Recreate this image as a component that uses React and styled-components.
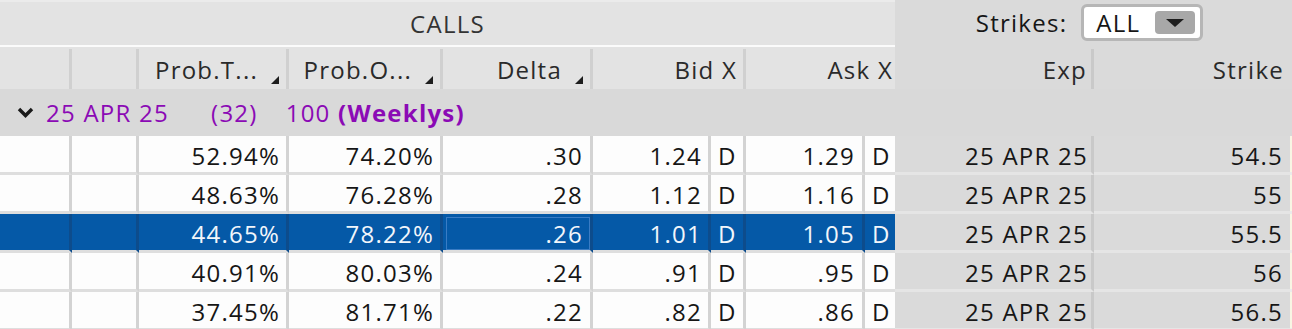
import styled, { createGlobalStyle } from "styled-components";

const GlobalStyle = createGlobalStyle`
    body {
        margin: 0;
        font-family: "Open Sans", "Noto Sans", sans-serif;
        background: #dadada;
    }
`;

const COLS = "72px 67px 150px 154px 150px 118px 35px 119px 30px 199px 196px 2px";

const Page = styled.div`
    width: 1292px;
    height: 329px;
    overflow: hidden;
    background: #dadada;
    color: #161616;
    font-size: 24px;
    letter-spacing: 1.25px;
`;

const TopBar = styled.div`
    display: grid;
    grid-template-columns: 895px 1fr;
    height: 47px;
`;

const Title = styled.div`
    display: flex;
    align-items: center;
    justify-content: center;
    background: #e3e3e3;
    border-top: 2px solid #ebebeb;
    border-bottom: 2px solid #fbfbfb;
    color: #333;
`;

const StrikesBox = styled.div`
    display: flex;
    align-items: center;
    justify-content: center;
    gap: 14px;
    padding: 0 8px 2px 0;
`;

const Select = styled.div`
    display: flex;
    align-items: center;
    justify-content: space-between;
    box-sizing: border-box;
    width: 122px;
    height: 37px;
    padding: 0 5px 0 12px;
    background: #fff;
    border: 3px solid #b6b6b6;
    border-radius: 6px;
`;

const SelectButton = styled.div`
    display: flex;
    align-items: center;
    justify-content: center;
    width: 40px;
    height: 23px;
    background: #a8a8a8;
    border-radius: 4px;
`;

const HeaderRow = styled.div`
    display: grid;
    grid-template-columns: ${COLS};
    height: 42px;
    background: linear-gradient(to right, #e3e3e3 895px, #dadada 895px);
`;

const HeaderCell = styled.div`
    display: flex;
    align-items: center;
    justify-content: flex-end;
    box-sizing: border-box;
    margin-top: 2px;
    padding-right: ${(p) => p.$pad ?? 6}px;
    grid-column: span ${(p) => p.$span ?? 1};
    border-right: ${(p) => (p.$noBorder ? "none" : `3px solid ${p.$line ?? "#d0d0d0"}`)};
    color: #2a2a2a;
    white-space: nowrap;
`;

const SortMark = styled.span`
    align-self: flex-end;
    margin: 0 1px 5px 13px;
    width: 0;
    height: 0;
    border-left: 8px solid transparent;
    border-bottom: 8px solid #1e1e1e;
`;

const GroupRow = styled.div`
    display: flex;
    align-items: center;
    height: 47px;
    padding-left: 17px;
    box-sizing: border-box;
    background: #d9d9d9;
    color: #8b0ab5;
`;

const GroupText = styled.span`
    margin-left: ${(p) => p.$gap}px;
    font-weight: ${(p) => (p.$bold ? 700 : 400)};
`;

const Row = styled.div`
    display: grid;
    grid-template-columns: ${COLS};
    height: 39px;
`;

const Cell = styled.div`
    display: flex;
    align-items: center;
    justify-content: ${(p) => (p.$left ? "flex-start" : "flex-end")};
    box-sizing: border-box;
    padding: 2px ${(p) => (p.$left ? 0 : p.$pad ?? 6)}px 0 ${(p) => (p.$left ? 7 : 0)}px;
    background: ${(p) => (p.$sel ? "#0559a7" : "#fdfdfd")};
    color: ${(p) => (p.$sel ? "#f2f6fb" : "#161616")};
    border-right: ${(p) => (p.$noBorder ? "none" : `3px solid ${p.$sel ? "#0d4c8c" : "#d3d3d3"}`)};
    border-bottom: 3px solid #dedede;
    outline: ${(p) => (p.$focus ? "1px solid #3a7cc4" : "none")};
    outline-offset: -4px;
`;

const SideCell = styled.div`
    display: flex;
    align-items: center;
    justify-content: flex-end;
    box-sizing: border-box;
    padding: 2px ${(p) => p.$pad}px 0 0;
    background: #dadada;
    border-right: ${(p) => (p.$line ? "3px solid #c9c9c9" : "none")};
    border-bottom: 3px solid #e5e5e5;
`;

const Edge = styled.div`
    background: #f8f6e4;
    border-bottom: 3px solid #ebebeb;
`;

const rows = [
    ["52.94%", "74.20%", ".30", "1.24", "1.29", "54.5"],
    ["48.63%", "76.28%", ".28", "1.12", "1.16", "55"],
    ["44.65%", "78.22%", ".26", "1.01", "1.05", "55.5"],
    ["40.91%", "80.03%", ".24", ".91", ".95", "56"],
    ["37.45%", "81.71%", ".22", ".82", ".86", "56.5"],
];

function Chevron() {
    return (
        <svg width="17" height="12" viewBox="0 0 17 12">
            <polyline points="2,2 8.5,8.5 15,2" fill="none" stroke="#1a1a1a" strokeWidth="3.4" />
        </svg>
    );
}

function App() {
    return (
        <Page>
            <GlobalStyle />
            <TopBar>
                <Title>CALLS</Title>
                <StrikesBox>
                    <span>Strikes:</span>
                    <Select>
                        <span>ALL</span>
                        <SelectButton>
                            <svg width="18" height="8" viewBox="0 0 18 8">
                                <polygon points="0,0 18,0 9,8" fill="#1e1e1e" />
                            </svg>
                        </SelectButton>
                    </Select>
                </StrikesBox>
            </TopBar>

            <HeaderRow>
                <HeaderCell />
                <HeaderCell />
                <HeaderCell>
                    Prob.T...
                    <SortMark />
                </HeaderCell>
                <HeaderCell>
                    Prob.O...
                    <SortMark />
                </HeaderCell>
                <HeaderCell>
                    Delta
                    <SortMark />
                </HeaderCell>
                <HeaderCell $span={2}>Bid X</HeaderCell>
                <HeaderCell $span={2} $noBorder $pad={2}>
                    Ask X
                </HeaderCell>
                <HeaderCell $line="#c9c9c9" $pad={4}>
                    Exp
                </HeaderCell>
                <HeaderCell $noBorder $pad={6}>
                    Strike
                </HeaderCell>
                <HeaderCell $noBorder $pad={0} />
            </HeaderRow>

            <GroupRow>
                <Chevron />
                <GroupText $gap={12}>25 APR 25</GroupText>
                <GroupText $gap={42}>(32)</GroupText>
                <GroupText $gap={28}>
                    100 <GroupText $gap={0} $bold>(Weeklys)</GroupText>
                </GroupText>
            </GroupRow>

            {rows.map((r, i) => {
                const sel = i === 2;
                return (
                    <Row key={r[5]}>
                        <Cell $sel={sel} />
                        <Cell $sel={sel} />
                        <Cell $sel={sel}>{r[0]}</Cell>
                        <Cell $sel={sel}>{r[1]}</Cell>
                        <Cell $sel={sel} $focus={sel} $pad={7}>
                            {r[2]}
                        </Cell>
                        <Cell $sel={sel}>{r[3]}</Cell>
                        <Cell $sel={sel} $left>
                            D
                        </Cell>
                        <Cell $sel={sel} $pad={7}>
                            {r[4]}
                        </Cell>
                        <Cell $sel={sel} $left $noBorder>
                            D
                        </Cell>
                        <SideCell $line $pad={3}>
                            25 APR 25
                        </SideCell>
                        <SideCell $pad={7}>{r[5]}</SideCell>
                        <Edge />
                    </Row>
                );
            })}
        </Page>
    );
}

export default App;
